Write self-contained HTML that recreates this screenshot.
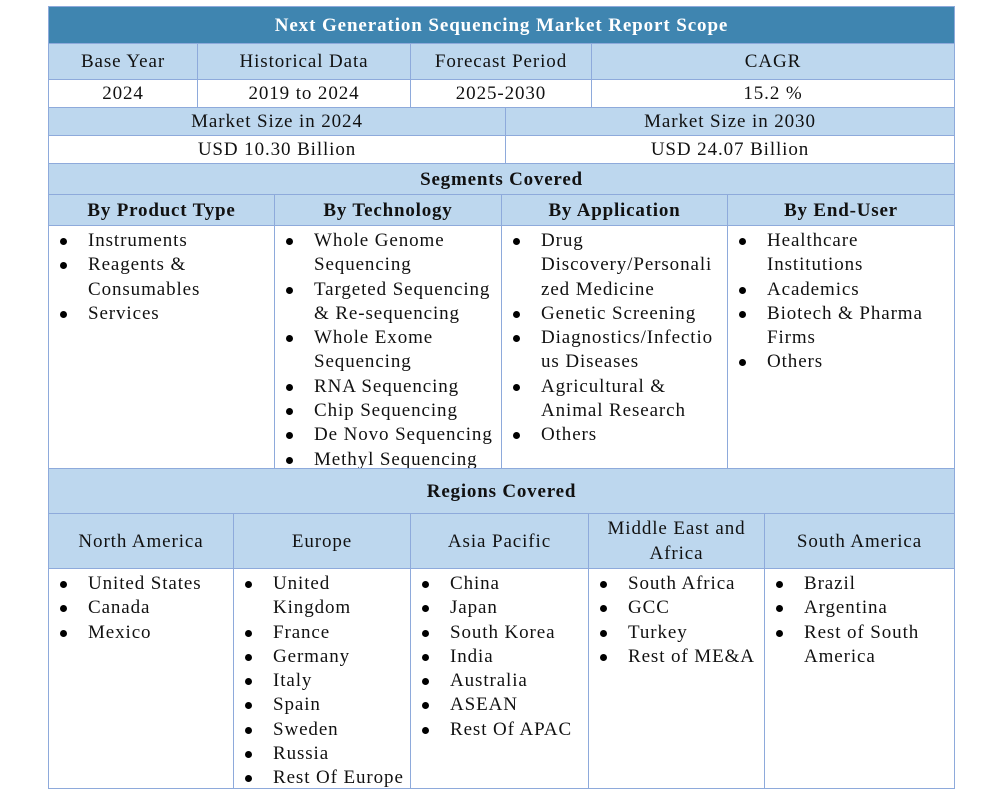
<!DOCTYPE html>
<html><head><meta charset="utf-8"><style>
body{margin:0;width:985px;height:795px;background:#fff;position:relative;font-family:"Liberation Serif",serif;color:#111;}
.c{position:absolute;box-sizing:border-box;border:1px solid #8eaadb;font-size:19px;letter-spacing:0.9px;white-space:nowrap;overflow:hidden;}
.m{display:flex;align-items:center;justify-content:center;text-align:center;line-height:25px;}
.b{background:#bdd7ee;}
.h{background:#3f85b0;color:#fff;font-weight:bold;}
.bold{font-weight:bold;letter-spacing:0.8px;}
ul{margin:0;padding:3px 0 0 0;list-style:none;}
li{position:relative;padding-left:39px;line-height:24.3px;}
li:before{content:"";position:absolute;left:11px;top:9px;width:7px;height:7px;border-radius:50%;background:#000;}
</style></head><body>
<div class="c m h" style="left:48px;top:6px;width:907px;height:38px;">Next Generation Sequencing Market Report Scope</div>

<div class="c m b" style="left:48px;top:43px;width:150px;height:37px;">Base Year</div>
<div class="c m b" style="left:197px;top:43px;width:214px;height:37px;">Historical Data</div>
<div class="c m b" style="left:410px;top:43px;width:182px;height:37px;">Forecast Period</div>
<div class="c m b" style="left:591px;top:43px;width:364px;height:37px;">CAGR</div>

<div class="c m" style="left:48px;top:79px;width:150px;height:29px;">2024</div>
<div class="c m" style="left:197px;top:79px;width:214px;height:29px;">2019 to 2024</div>
<div class="c m" style="left:410px;top:79px;width:182px;height:29px;">2025-2030</div>
<div class="c m" style="left:591px;top:79px;width:364px;height:29px;">15.2 %</div>

<div class="c m b" style="left:48px;top:107px;width:458px;height:29px;">Market Size in 2024</div>
<div class="c m b" style="left:505px;top:107px;width:450px;height:29px;">Market Size in 2030</div>
<div class="c m" style="left:48px;top:135px;width:458px;height:29px;">USD 10.30 Billion</div>
<div class="c m" style="left:505px;top:135px;width:450px;height:29px;">USD 24.07 Billion</div>

<div class="c m b bold" style="left:48px;top:163px;width:907px;height:32px;">Segments Covered</div>
<div class="c m b bold" style="left:48px;top:194px;width:227px;height:32px;">By Product Type</div>
<div class="c m b bold" style="left:274px;top:194px;width:228px;height:32px;">By Technology</div>
<div class="c m b bold" style="left:501px;top:194px;width:227px;height:32px;">By Application</div>
<div class="c m b bold" style="left:727px;top:194px;width:228px;height:32px;">By End-User</div>

<div class="c" style="left:48px;top:225px;width:227px;height:244px;"><ul><li>Instruments</li><li>Reagents &amp;<br>Consumables</li><li>Services</li></ul></div>
<div class="c" style="left:274px;top:225px;width:228px;height:244px;"><ul><li>Whole Genome<br>Sequencing</li><li>Targeted Sequencing<br>&amp; Re-sequencing</li><li>Whole Exome<br>Sequencing</li><li>RNA Sequencing</li><li>Chip Sequencing</li><li>De Novo Sequencing</li><li>Methyl Sequencing</li></ul></div>
<div class="c" style="left:501px;top:225px;width:227px;height:244px;"><ul><li>Drug<br>Discovery/Personali<br>zed Medicine</li><li>Genetic Screening</li><li>Diagnostics/Infectio<br>us Diseases</li><li>Agricultural &amp;<br>Animal Research</li><li>Others</li></ul></div>
<div class="c" style="left:727px;top:225px;width:228px;height:244px;"><ul><li>Healthcare<br>Institutions</li><li>Academics</li><li>Biotech &amp; Pharma<br>Firms</li><li>Others</li></ul></div>

<div class="c m b bold" style="left:48px;top:468px;width:907px;height:46px;">Regions Covered</div>
<div class="c m b" style="left:48px;top:513px;width:186px;height:56px;">North America</div>
<div class="c m b" style="left:233px;top:513px;width:178px;height:56px;">Europe</div>
<div class="c m b" style="left:410px;top:513px;width:179px;height:56px;">Asia Pacific</div>
<div class="c m b" style="left:588px;top:513px;width:177px;height:56px;">Middle East and<br>Africa</div>
<div class="c m b" style="left:764px;top:513px;width:191px;height:56px;">South America</div>

<div class="c" style="left:48px;top:568px;width:186px;height:221px;"><ul><li>United States</li><li>Canada</li><li>Mexico</li></ul></div>
<div class="c" style="left:233px;top:568px;width:178px;height:221px;"><ul><li>United<br>Kingdom</li><li>France</li><li>Germany</li><li>Italy</li><li>Spain</li><li>Sweden</li><li>Russia</li><li>Rest Of Europe</li></ul></div>
<div class="c" style="left:410px;top:568px;width:179px;height:221px;"><ul><li>China</li><li>Japan</li><li>South Korea</li><li>India</li><li>Australia</li><li>ASEAN</li><li>Rest Of APAC</li></ul></div>
<div class="c" style="left:588px;top:568px;width:177px;height:221px;"><ul><li>South Africa</li><li>GCC</li><li>Turkey</li><li>Rest of ME&amp;A</li></ul></div>
<div class="c" style="left:764px;top:568px;width:191px;height:221px;"><ul><li>Brazil</li><li>Argentina</li><li>Rest of South<br>America</li></ul></div>
</body></html>
